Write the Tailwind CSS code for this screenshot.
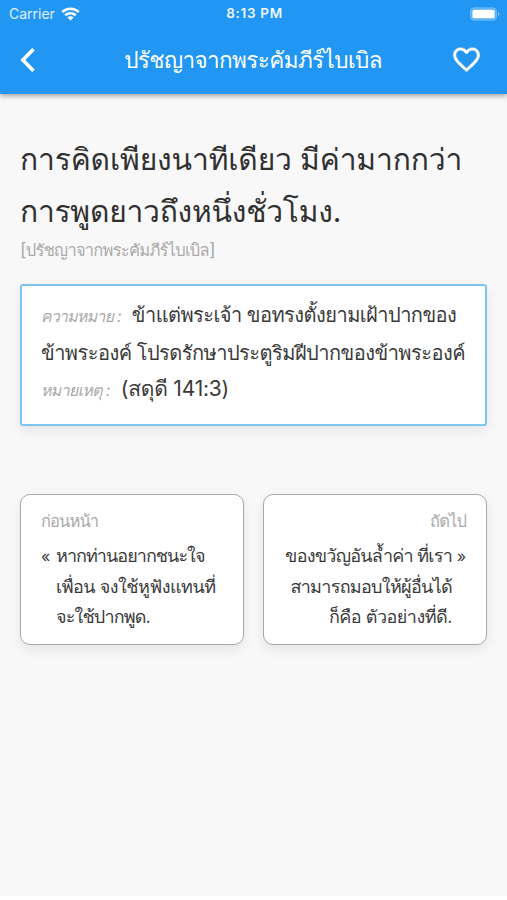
<!DOCTYPE html>
<html lang="th">
<head>
<meta charset="utf-8">
<title>ปรัชญาจากพระคัมภีร์ไบเบิล</title>
<script src="https://cdn.jsdelivr.net/npm/@tailwindcss/browser@4"></script>
</head>
<body class="h-[900px] overflow-hidden bg-white font-['Inter','Loma',sans-serif]">
<div class="flex h-[896px] flex-col bg-[#f8f8f8] text-[#3a3a3a]">
  <header class="h-[94px] shrink-0 bg-[#2196f3] text-white shadow-[0_2px_5px_rgba(0,0,0,0.35)]">
    <div class="grid h-[27px] grid-cols-3 items-center pl-[9px] pr-[7px] text-[13px]">
      <div class="flex items-center gap-[6px] text-white/85"><span class="text-[14px]">Carrier</span>
        <svg class="h-[14px] w-[19px] text-white" viewBox="0 0 19 14" fill="none" stroke="currentColor" stroke-width="2.6"><path d="M1.2 5.1C5.8.7 13.2.7 17.8 5.1M4.2 8.3c3-2.7 7.6-2.7 10.6 0"/><path d="M9.5 13.5 6.4 10.4c1.7-1.6 4.5-1.6 6.2 0z" fill="currentColor" stroke="none"/></svg>
      </div>
      <div class="text-center text-[13.5px] font-semibold tracking-[0.7px] whitespace-nowrap text-white/95">8:13 PM</div>
      <svg class="h-[14px] w-[30px] justify-self-end" viewBox="0 0 31 14"><rect x=".5" y=".5" width="27" height="13" rx="4" fill="#fff" fill-opacity=".25" stroke="#fff" stroke-opacity=".25"/><rect x="2.5" y="2.5" width="23" height="9" rx="2" fill="#fff"/><path d="M29 4.8c2 .8 2 3.6 0 4.4z" fill="#fff" fill-opacity=".45"/></svg>
    </div>
    <div class="flex h-[65px] items-center justify-between pl-[20px] pr-[27px]">
      <svg class="h-6 w-4" viewBox="0 0 16 24" fill="none" stroke="#fff" stroke-width="3.6"><path d="M13.5 1.2 2.8 12l10.7 10.8"/></svg>
      <h1 class="ml-[18px] text-[22.5px] leading-8 tracking-[-0.62px] whitespace-nowrap">ปรัชญาจากพระคัมภีร์ไบเบิล</h1>
      <svg class="-mr-px h-[29px] w-[29px]" viewBox="1 1 22 22" fill="#fff" stroke="#fff" stroke-width=".3"><path d="M16.5 3c-1.74 0-3.41.81-4.5 2.09C10.91 3.81 9.24 3 7.5 3 4.42 3 2 5.42 2 8.5c0 3.78 3.4 6.86 8.55 11.54L12 21.35l1.45-1.32C18.6 15.36 22 12.28 22 8.5 22 5.42 19.58 3 16.5 3zm-4.4 15.55-.1.1-.1-.1C7.14 14.24 4 11.39 4 8.5 4 6.5 5.5 5 7.5 5c1.54 0 3.04.99 3.57 2.36h1.87C13.46 5.99 14.96 5 16.5 5c2 0 3.5 1.5 3.5 3.5 0 2.89-3.14 5.74-7.9 10.05z"/></svg>
    </div>
  </header>
  <main class="px-5 pt-[39px]">
    <h2 class="mb-px text-[30px] leading-[52px] tracking-[-0.15px] whitespace-nowrap text-[#303030]">การคิดเพียงนาทีเดียว มีค่ามากกว่า<br><span class="tracking-[-0.25px]">การพูดยาวถึงหนึ่งชั่วโมง.</span></h2>
    <p class="h-[24px] text-[16.5px] leading-6 tracking-[-0.75px] whitespace-nowrap text-[#aaa]"><span class="text-[18px]">[</span>ปรัชญาจากพระคัมภีร์ไบเบิล<span class="text-[18px]">]</span></p>
    <section class="mt-[22px] h-[142px] rounded-[3px] border-2 border-[#7cc5f1] bg-white px-[19px] pt-[11px] text-[20px] leading-[36.6px] tracking-[-0.52px] whitespace-nowrap shadow-[0_5px_12px_rgba(0,0,0,0.08)]">
      <p><i class="mr-[11px] text-[16px] tracking-[-0.8px] text-[#aaa]">ความหมาย :</i><span class="tracking-[-0.53px]">ข้าแต่พระเจ้า ขอทรงตั้งยามเฝ้าปากของ</span></p>
      <p>ข้าพระองค์ โปรดรักษาประตูริมฝีปากของข้าพระองค์</p>
      <p><i class="mr-[11px] text-[16px] tracking-[-0.7px] text-[#aaa]">หมายเหตุ :</i><span class="text-[21px] tracking-[-0.2px]">(สดุดี 141:3)</span></p>
    </section>
    <div class="mt-[68px] grid grid-cols-[224px_224px] justify-between text-[18px] leading-[30.6px] whitespace-nowrap">
      <section class="h-[151px] rounded-[10px] border-[1.5px] border-[#a9a9a9] bg-white px-5 pt-[12px] shadow-[0_5px_12px_rgba(0,0,0,0.08)]">
        <h3 class="mb-[6px] text-[16.5px] leading-[28px] tracking-[-0.9px] text-[#aaa]">ก่อนหน้า</h3>
        <div class="flex"><span class="w-[15px] shrink-0 text-[16px]">«</span><p><span class="tracking-[-0.97px]">หากท่านอยากชนะใจ</span><br><span class="tracking-[-0.5px]">เพื่อน จงใช้หูฟังแทนที่</span><br><span class="tracking-[-0.85px]">จะใช้ปากพูด.</span></p></div>
      </section>
      <section class="h-[151px] rounded-[10px] border-[1.5px] border-[#a9a9a9] bg-white px-5 pt-[12px] text-right shadow-[0_5px_12px_rgba(0,0,0,0.08)]">
        <h3 class="mb-[6px] text-[16.5px] leading-[28px] tracking-[-0.9px] text-[#aaa]">ถัดไป</h3>
        <div class="flex justify-end"><p><span class="tracking-[-0.75px]">ของขวัญอันล้ำค่า ที่เรา</span><br><span class="tracking-[-0.7px]">สามารถมอบให้ผู้อื่นได้</span><br><span class="tracking-[-0.5px]">ก็คือ ตัวอย่างที่ดี.</span></p><span class="w-[14px] shrink-0 text-[16px]">»</span></div>
      </section>
    </div>
  </main>
</div>
</body>
</html>
